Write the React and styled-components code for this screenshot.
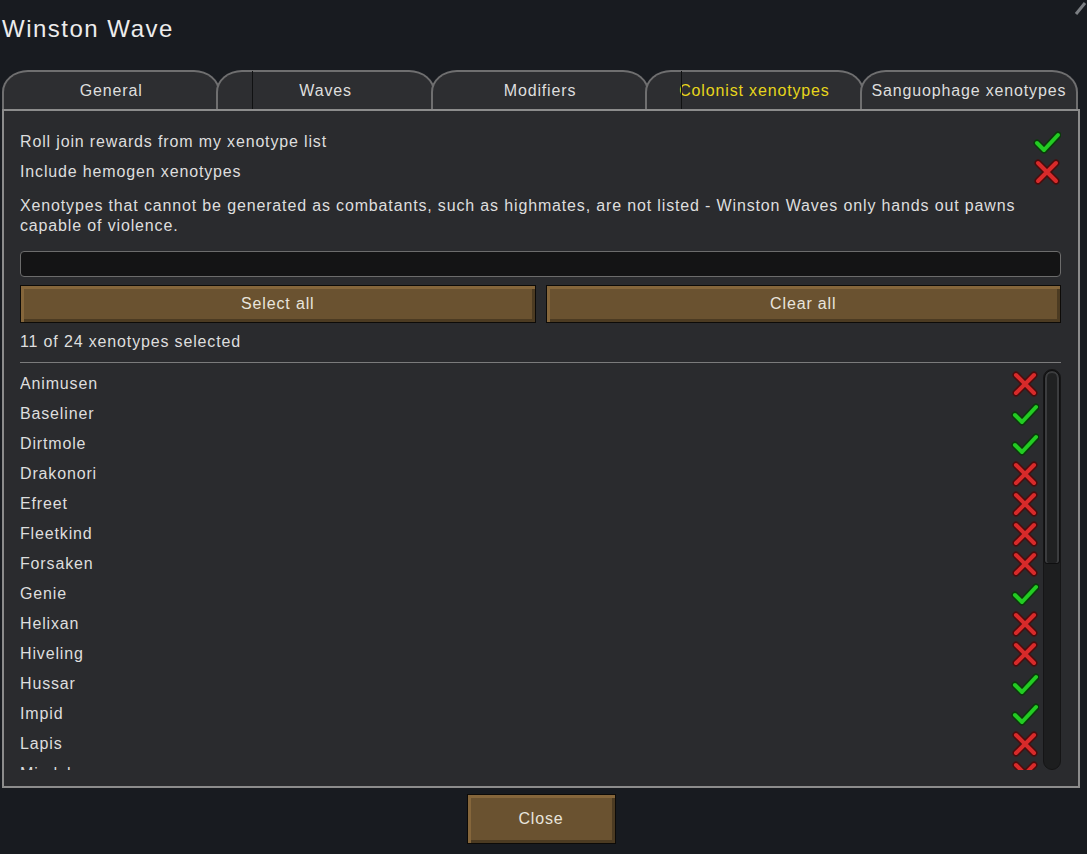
import React from 'react';
import styled, { createGlobalStyle } from 'styled-components';

const GlobalStyle = createGlobalStyle`
  html, body {
    margin: 0;
    padding: 0;
    background: #181b20;
  }
  body {
    font-family: "Liberation Sans", Arial, sans-serif;
    color: #dedede;
    letter-spacing: 0.85px;
  }
`;

const Window = styled.div`
  position: relative;
  width: 1087px;
  height: 854px;
  padding-left: 2px;
  box-sizing: border-box;
  overflow: hidden;
`;

const CloseCorner = styled.svg`
  position: absolute;
  top: 0;
  right: 0;
`;

const Title = styled.h1`
  margin: 0;
  height: 70px;
  padding-top: 13px;
  box-sizing: border-box;
  font-size: 24px;
  line-height: 32px;
  font-weight: normal;
  letter-spacing: 1.5px;
  color: #ececec;
`;

const TabRow = styled.div`
  display: flex;
  width: 1076px;
  height: 39px;
  position: relative;
  z-index: 1;
`;

const Tab = styled.div`
  flex: 1;
  position: relative;
  margin-left: -4px;
  &:first-child { margin-left: 0; }
  height: 39px;
  box-sizing: border-box;
  background: #2d2e31;
  border: 2px solid #6f6f70;
  border-bottom: none;
  border-radius: 26px 26px 0 0 / 22px 22px 0 0;
  display: flex;
  align-items: center;
  justify-content: center;
  font-size: 16px;
  white-space: nowrap;
  color: ${(p) => (p.$active ? '#e7d51c' : '#dedede')};

  ${(p) =>
    p.$seam &&
    `
    &::before {
      content: '';
      position: absolute;
      left: 34px;
      top: -1px;
      bottom: 0;
      width: 1px;
      background: #101112;
    }
  `}
`;

const Panel = styled.div`
  width: 1078px;
  height: 679px;
  box-sizing: border-box;
  border: 2px solid #8c8c8c;
  background: #2a2b2e;
  padding: 16px 17px 16px 16px;
  display: flex;
  flex-direction: column;
`;

const OptionRow = styled.div`
  display: flex;
  align-items: center;
  justify-content: space-between;
  height: 30px;
  font-size: 16px;
`;

const Note = styled.p`
  margin: 9px 0 0;
  font-size: 16px;
  line-height: 20px;
  padding-right: 20px;
`;

const Search = styled.div`
  margin-top: 15px;
  height: 26px;
  box-sizing: border-box;
  background: #141415;
  border: 1px solid #6c6c6c;
  border-radius: 4px;
`;

const ButtonRow = styled.div`
  display: grid;
  grid-template-columns: 1fr 1fr;
  gap: 10px;
  margin-top: 8px;
`;

const WoodButton = styled.button`
  height: ${(p) => p.$h || 38}px;
  width: ${(p) => (p.$w ? `${p.$w}px` : 'auto')};
  box-sizing: border-box;
  border: 1px solid #0d0b08;
  background: #6a5230;
  box-shadow:
    inset 3px 3px 0 #85663b,
    inset -3px -3px 0 #4c3b22;
  color: #e8e4dc;
  font-family: "Liberation Sans", Arial, sans-serif;
  font-size: 16px;
  letter-spacing: 0.85px;
  padding: 0;
`;

const Count = styled.div`
  margin-top: 9px;
  font-size: 16px;
  line-height: 20px;
`;

const Divider = styled.hr`
  margin: 10px 0 0;
  border: none;
  height: 1px;
  background: #7b7b7c;
`;

const ListArea = styled.div`
  margin-top: 6px;
  flex: 1;
  min-height: 0;
  display: flex;
  gap: 2px;
  overflow: hidden;
`;

const List = styled.div`
  flex: 1;
  overflow: hidden;
`;

const ItemRow = styled.div`
  display: flex;
  align-items: center;
  justify-content: space-between;
  height: 30px;
  font-size: 16px;
  padding-right: 2px;
`;

const Track = styled.div`
  width: 18px;
  border-radius: 9px;
  background: #1d1e1f;
  border: 1px solid #151516;
  box-sizing: border-box;
  display: flex;
  flex-direction: column;
`;

const Thumb = styled.div`
  height: 192px;
  border-radius: 8px 8px 3px 3px;
  background: #202122;
  box-shadow:
    inset 2px 0 0 #3c3d3f,
    inset -2px 0 0 #3c3d3f,
    inset 0 2px 0 #3c3d3f;
  border: 1px solid #0f0f10;
`;

const Footer = styled.div`
  display: flex;
  justify-content: center;
  width: 1078px;
  padding-top: 6px;
`;

const Check = () => (
  <svg width="28" height="28" viewBox="0 0 28 28">
    <path d="M4 15 L11 22 L25 7" fill="none" stroke="#0b3a0b" strokeWidth="7" strokeLinecap="round" strokeLinejoin="round" />
    <path d="M4 15 L11 22 L25 7" fill="none" stroke="#23cc23" strokeWidth="4" strokeLinecap="round" strokeLinejoin="round" />
  </svg>
);

const Cross = () => (
  <svg width="28" height="28" viewBox="0 0 28 28">
    <path d="M5 5 L23 23 M23 5 L5 23" fill="none" stroke="#4a0c0c" strokeWidth="7" strokeLinecap="round" />
    <path d="M5 5 L23 23 M23 5 L5 23" fill="none" stroke="#d82a2a" strokeWidth="4" strokeLinecap="round" />
  </svg>
);

const tabs = [
  { label: 'General' },
  { label: 'Waves', seam: true },
  { label: 'Modifiers' },
  { label: 'Colonist xenotypes', seam: true, active: true },
  { label: 'Sanguophage xenotypes' },
];

const xenotypes = [
  ['Animusen', false],
  ['Baseliner', true],
  ['Dirtmole', true],
  ['Drakonori', false],
  ['Efreet', false],
  ['Fleetkind', false],
  ['Forsaken', false],
  ['Genie', true],
  ['Helixan', false],
  ['Hiveling', false],
  ['Hussar', true],
  ['Impid', true],
  ['Lapis', false],
  ['Mindshearer', false],
  ['Neanderthal', true],
];

export default function App() {
  return (
    <Window>
      <GlobalStyle />
      <CloseCorner width="14" height="16" viewBox="0 0 14 16">
        <path d="M3 14 L12 3" stroke="#7c7f83" strokeWidth="3" />
      </CloseCorner>
      <Title>Winston Wave</Title>
      <TabRow>
        {tabs.map((t) => (
          <Tab key={t.label} $active={t.active} $seam={t.seam}>
            {t.label}
          </Tab>
        ))}
      </TabRow>
      <Panel>
        <OptionRow>
          <span>Roll join rewards from my xenotype list</span>
          <Check />
        </OptionRow>
        <OptionRow>
          <span>Include hemogen xenotypes</span>
          <Cross />
        </OptionRow>
        <Note>
          Xenotypes that cannot be generated as combatants, such as highmates, are not listed - Winston Waves only hands out pawns capable of violence.
        </Note>
        <Search />
        <ButtonRow>
          <WoodButton>Select all</WoodButton>
          <WoodButton>Clear all</WoodButton>
        </ButtonRow>
        <Count>11 of 24 xenotypes selected</Count>
        <Divider />
        <ListArea>
          <List>
            {xenotypes.map(([name, on]) => (
              <ItemRow key={name}>
                <span>{name}</span>
                {on ? <Check /> : <Cross />}
              </ItemRow>
            ))}
          </List>
          <Track>
            <Thumb />
          </Track>
        </ListArea>
      </Panel>
      <Footer>
        <WoodButton $w={149} $h={50}>Close</WoodButton>
      </Footer>
    </Window>
  );
}
